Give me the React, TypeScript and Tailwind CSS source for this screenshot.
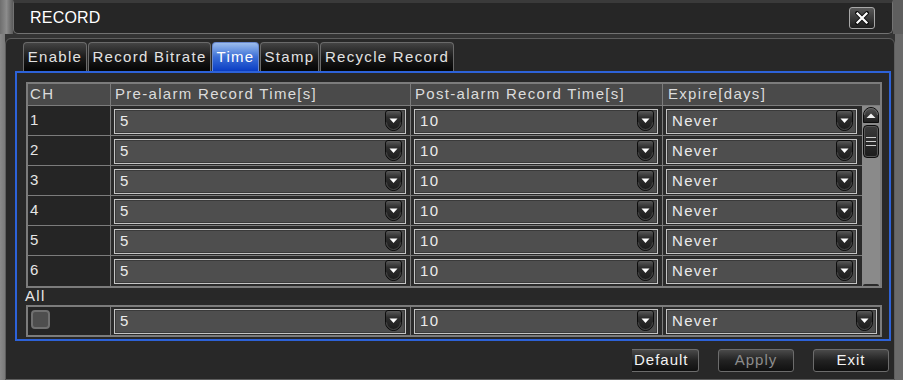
import React from "react";

const FONT = { fontFamily: '"Liberation Sans", Arial, sans-serif' };

function DropBtn() {
  return (
    <svg width="17" height="21" viewBox="0 0 17 21" className="absolute right-[3px] top-[0px]">
      <defs>
        <linearGradient id="dbg" x1="0" y1="0" x2="0" y2="1">
          <stop offset="0" stopColor="#5c5c5c" />
          <stop offset="0.35" stopColor="#2e2e2e" />
          <stop offset="1" stopColor="#1a1a1a" />
        </linearGradient>
      </defs>
      <path d="M0.5 3 Q0.5 0.5 3 0.5 H14 Q16.5 0.5 16.5 3 V12.5 A8 8 0 0 1 0.5 12.5 Z" fill="url(#dbg)" stroke="#0c0c0c" />
      <path d="M1.5 12.5 A7 7 0 0 0 15.5 12.5" fill="none" stroke="#4a4a4a" />
      <path d="M4.5 8.5 H12.5 L8.5 13 Z" fill="#ffffff" />
    </svg>
  );
}

function Select({ value, w }: { value: string; w: number }) {
  return (
    <div
      className="relative h-[25px] border border-[#c4c4c4] bg-[#4e4e4e] shadow-[inset_0_0_0_1px_#3a3a3a] flex items-center pl-[5px] text-[15px] tracking-[1.3px] text-[#ececec]"
      style={{ width: w }}
    >
      {value}
      <DropBtn />
    </div>
  );
}

function Tab({ label, w, active }: { label: string; w: string; active?: boolean }) {
  return (
    <div
      className={
        "h-[29px] flex items-center justify-center rounded-t-[4px] border border-b-0 text-[15px] tracking-[1.3px] " +
        w +
        " " +
        (active
          ? "bg-gradient-to-b from-[#9cbcec] via-[#3c6ed6] to-[#0a3cc4] border-[#6a8ad0] text-white"
          : "bg-gradient-to-b from-[#444444] via-[#1c1c1c] to-[#050505] border-[#6a6a6a] text-[#e2e2e2]")
      }
    >
      {label}
    </div>
  );
}

function Btn({ label, disabled, extra }: { label: string; disabled?: boolean; extra?: string }) {
  return (
    <div
      className={
        "h-[23px] flex items-center rounded-[3px] border border-[#6c6c6c] bg-gradient-to-b from-[#4a4a4a] via-[#222222] to-[#101010] text-[15px] tracking-[1px] " +
        (disabled ? "text-[#8c8c8c] " : "text-[#f2f2f2] ") +
        (extra ?? "")
      }
    >
      {label}
    </div>
  );
}

const rows = ["1", "2", "3", "4", "5", "6"];

export default function App() {
  return (
    <div
      className="w-[903px] h-[380px] overflow-hidden bg-[linear-gradient(to_right,#8a8a8a_0px,#7a7a7a_5px,#333333_5px,#333333_895px,#6a6a6a_895px)]"
      style={FONT}
    >
      {/* title row */}
      <div className="flex h-[34px]">
        <div className="w-[13px] h-full bg-gradient-to-r from-[#6e6e6e] via-[#8c8c8c] to-[#5a5a5a]" />
        <div className="w-[880px] h-[34px] bg-[#262626] border border-t-[3px] border-t-[#3a3a3a] border-[#727272] rounded-b-[5px] flex items-center justify-between pl-[16px] pr-[17px]">
          <span className="text-[16px] text-white tracking-[0.2px]">RECORD</span>
          <div className="w-[26px] h-[22px] rounded-[3px] border border-[#a8a8a8] bg-gradient-to-b from-[#5a5a5a] to-[#1e1e1e] flex items-center justify-center">
            <svg width="14" height="14" viewBox="0 0 14 14">
              <path d="M2 2 L12 12 M12 2 L2 12" stroke="#111" strokeWidth="4" strokeLinecap="square" />
              <path d="M2.5 2.5 L11.5 11.5 M11.5 2.5 L2.5 11.5" stroke="#fff" strokeWidth="2.2" strokeLinecap="square" />
            </svg>
          </div>
        </div>
        <div className="flex-1 bg-[#5e5e5e]" />
      </div>

      {/* main panel */}
      <div className="mt-[4px] ml-[5px] w-[890px] h-[342px] bg-[#282828] border border-[#5e5e5e] rounded-t-[6px] pt-[3px] pl-[9px] pr-[5px]">
        {/* tabs */}
        <div className="flex gap-[1px] ml-[8px]">
          <Tab label="Enable" w="w-[64px]" />
          <Tab label="Record Bitrate" w="w-[123px]" />
          <Tab label="Time" w="w-[47px]" active />
          <Tab label="Stamp" w="w-[59px]" />
          <Tab label="Recycle Record" w="w-[134px]" />
        </div>

        {/* blue frame */}
        <div className="w-[876px] h-[270px] border-2 border-[#2d62d8] pt-[9px] pl-[9px]">
          {/* table */}
          <div className="w-[856px] border-2 border-[#7c7c7c] text-[15px] tracking-[1.3px] text-[#e6e6e6]">
            <div className="flex h-[22px] bg-[#4a4a4a] border-b border-[#7c7c7c] text-[#dcdcdc]">
              <div className="w-[83px] border-r border-[#7c7c7c] pl-[2px] flex items-center">CH</div>
              <div className="w-[300px] border-r border-[#7c7c7c] pl-[4px] flex items-center">Pre-alarm Record Time[s]</div>
              <div className="w-[252px] border-r border-[#7c7c7c] pl-[4px] flex items-center">Post-alarm Record Time[s]</div>
              <div className="flex-1 pl-[5px] flex items-center">Expire[days]</div>
            </div>
            <div className="flex">
              <div className="w-[834px]">
                {rows.map((r, i) => (
                  <div
                    key={r}
                    className={"flex h-[30px] bg-[#2a2a2a] " + (i < rows.length - 1 ? "border-b border-[#7c7c7c]" : "")}
                  >
                    <div className="w-[83px] border-r border-[#7c7c7c] bg-[#252525] pl-[2px] flex items-center pb-[1px]">
                      {r}
                    </div>
                    <div className="w-[300px] border-r border-[#7c7c7c] pl-[3px] pt-[3px]">
                      <Select value="5" w={292} />
                    </div>
                    <div className="w-[252px] border-r border-[#7c7c7c] pl-[3px] pt-[3px]">
                      <Select value="10" w={244} />
                    </div>
                    <div className="w-[199px] pl-[3px] pt-[3px]">
                      <Select value="Never" w={191} />
                    </div>
                  </div>
                ))}
              </div>
              {/* scrollbar */}
              <div className="w-[18px] bg-[#8a8a8a] flex flex-col items-center pt-[1px] relative">
                <svg width="16" height="16" viewBox="0 0 16 16">
                  <defs>
                    <linearGradient id="sbg" x1="0" y1="0" x2="0" y2="1">
                      <stop offset="0" stopColor="#555" />
                      <stop offset="1" stopColor="#1c1c1c" />
                    </linearGradient>
                  </defs>
                  <path d="M0.5 15.5 V8 A7.5 7.5 0 0 1 15.5 8 V15.5 Z" fill="url(#sbg)" stroke="#0c0c0c" />
                  <path d="M1.5 8 A6.5 6.5 0 0 1 14.5 8" fill="none" stroke="#6a6a6a" />
                  <path d="M3.5 11 H12.5 L8 6.5 Z" fill="#f0f0f0" />
                </svg>
                <div className="mt-[2px] w-[16px] h-[33px] rounded-[4px] border border-[#0c0c0c] bg-gradient-to-b from-[#3a3a3a] to-[#1c1c1c] shadow-[inset_0_0_0_1px_#555] flex flex-col items-center justify-center gap-[3px]">
                  <div className="w-[10px] h-[1px] bg-[#cfcfcf]" />
                  <div className="w-[10px] h-[1px] bg-[#cfcfcf]" />
                  <div className="w-[10px] h-[1px] bg-[#cfcfcf]" />
                </div>
                <div className="absolute bottom-0 left-[1px] w-[16px] h-[2px] rounded-t-[3px] bg-[#2a2a2a]" />
              </div>
            </div>
          </div>

          {/* All label */}
          <div className="h-[17px] -ml-[1px] flex items-center text-[15px] tracking-[1.3px] text-[#e6e6e6]">All</div>

          {/* All row */}
          <div className="w-[856px] h-[32px] border-2 border-[#7c7c7c] flex bg-[#2a2a2a] text-[15px]">
            <div className="w-[83px] border-r border-[#7c7c7c] bg-[#252525] pl-[3px] pt-[3px]">
              <div className="w-[19px] h-[19px] rounded-[4px] border-2 border-[#707070] bg-[#4e4e4e]" />
            </div>
            <div className="w-[300px] border-r border-[#7c7c7c] pl-[3px] pt-[2px]">
              <Select value="5" w={292} />
            </div>
            <div className="w-[252px] border-r border-[#7c7c7c] pl-[3px] pt-[2px]">
              <Select value="10" w={244} />
            </div>
            <div className="flex-1 pl-[3px] pt-[2px]">
              <Select value="Never" w={211} />
            </div>
          </div>
        </div>

        {/* buttons */}
        <div className="mt-[8px] flex justify-end gap-[19px] pr-[0px]">
          <Btn label="Default" extra="w-[67px] pl-[2px] border-l-0 rounded-l-none" />
          <Btn label="Apply" disabled extra="w-[76px] justify-center" />
          <Btn label="Exit" extra="w-[76px] justify-center" />
        </div>
      </div>
    </div>
  );
}
